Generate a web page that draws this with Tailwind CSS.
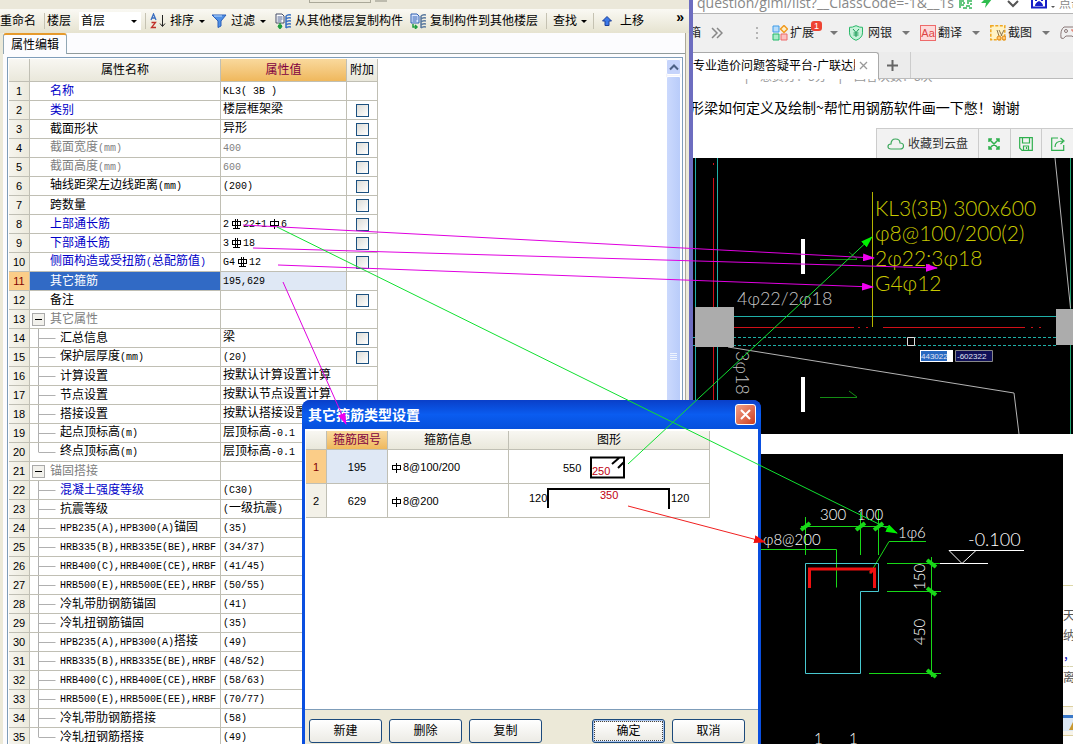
<!DOCTYPE html>
<html lang="zh-CN">
<head>
  <meta charset="UTF-8" />
  <meta name="viewport" content="width=device-width, initial-scale=1.0"/>
  <title>属性编辑</title>
  <script src="https://cdn.jsdelivr.net/npm/@tailwindcss/browser@4"></script>
</head>
<body class="relative h-screen overflow-hidden flex bg-white text-black text-[12px] leading-[18px] font-['Liberation_Sans','Noto_Sans_CJK_SC',sans-serif]">

  <!-- Rebar symbols shared by both tables -->
  <svg class="hidden">
    <symbol id="bar-1" viewBox="0 0 12 12"><path d="M5.500 1v10M1.500 3.500h8v4h-8z" fill="none" stroke="currentColor" shape-rendering="crispEdges"/></symbol>
    <symbol id="bar-2" viewBox="0 0 12 12"><path d="M4.500 1v9M6.500 1v9M1.500 3.500h8v4h-8zM2 10.500h7" fill="none" stroke="currentColor" shape-rendering="crispEdges"/></symbol>
  </svg>

  <!-- Property editor window -->
  <section class="w-[693px] shrink-0 h-full flex flex-col bg-[#ece9d8] border-r-4 border-[#6d6dc0] overflow-hidden">
    <div class="h-[9px] shrink-0 flex items-start pl-[309px] bg-[#ebe8da]">
      <span class="w-[62px] h-[3px] border border-t-0 border-[#aaa899]"></span>
      <span class="w-3 h-[2px] ml-1 bg-[#bdbbae]"></span>
    </div>
    <nav class="h-6 shrink-0 flex items-center whitespace-nowrap bg-linear-to-b from-[#faf9f4] to-[#e6e3d0]">
      <button>重命名</button>
      <span class="w-px h-4 bg-[#c5c2b2] ml-2 mr-[2px]"></span>
      <label for="floor">楼层</label>
      <span class="relative ml-2 flex items-center">
        <select id="floor" class="appearance-none w-[62px] h-[18px] bg-white pl-[2px] leading-[16px]"><option>首层</option></select>
        <span class="absolute right-1 border-x-[3px] border-t-[3px] border-x-transparent border-t-black"></span>
      </span>
      <span class="w-px h-4 bg-[#c5c2b2] ml-1 mr-1"></span>
      <button class="flex items-center">
        <svg class="w-4 h-4 mr-1" viewBox="0 0 16 16" fill="none"><path d="M1 7l2.500-6L6 7M2 5h3" stroke="#3a6ec0" stroke-width="1.300"/><path d="M1.500 9.500h4l-4 5h4.500" stroke="#c0302a" stroke-width="1.300"/><path d="M12.500 2v11M10 10.500l2.500 3 2.500-3" stroke="#222"/></svg>
        排序<span class="ml-[5px] border-x-[3px] border-t-[3px] border-x-transparent border-t-black"></span>
      </button>
      <button class="flex items-center ml-[6px]">
        <svg class="w-4 h-4 mr-1" viewBox="0 0 16 16"><path d="M1 2h14l-5 6v5l-3 1.500V8z" fill="#4f90e6" stroke="#2a5fb8"/><path d="M3 3h8" stroke="#bcdcff"/></svg>
        过滤<span class="ml-[5px] border-x-[3px] border-t-[3px] border-x-transparent border-t-black"></span>
      </button>
      <button class="flex items-center ml-[9px]">
        <svg class="w-4 h-4 mr-1" viewBox="0 0 16 16" fill="none"><path d="M1 1h6l2 2v7H1z" fill="#fff" stroke="#444c66"/><path d="M2.500 4h5M2.500 6h5M2.500 8h4" stroke="#4a5e90"/><path d="M3 12.500h4M5 10v6M3 13l2 2.500L7 13" stroke="#1f9e40" stroke-width="1.500"/><path d="M11 3q2-2 5-1M11 6q2-2 5-1M11 9q2-2 5-1M11 12q2-2 5-1M11 15q2-2 5-1M11 3v12" stroke="#3970c4" stroke-width="1.500"/></svg>
        从其他楼层复制构件
      </button>
      <button class="flex items-center ml-[7px]">
        <svg class="w-4 h-4 mr-1" viewBox="0 0 16 16" fill="none"><path d="M1 1h6l2 2v7H1z" fill="#dce8ff" stroke="#2f5eb0"/><path d="M2.500 4h5M2.500 6h5M2.500 8h4" stroke="#2f5eb0"/><path d="M3 11v3h4M5 12l2 2-2 2" stroke="#1f9e40" stroke-width="1.500"/><path d="M11 3q2-2 5-1M11 6q2-2 5-1M11 9q2-2 5-1M11 12q2-2 5-1M11 15q2-2 5-1M11 3v12" stroke="#58789e" stroke-width="1.500"/></svg>
        复制构件到其他楼层
      </button>
      <span class="w-px h-4 bg-[#c5c2b2] ml-2 mr-[6px]"></span>
      <button class="flex items-center">查找<span class="ml-1 border-x-[3px] border-t-[3px] border-x-transparent border-t-black"></span></button>
      <span class="w-px h-4 bg-[#c5c2b2] ml-[6px] mr-2"></span>
      <button class="flex items-center">
        <svg class="w-[10px] h-[10px] mr-2" viewBox="0 0 10 10"><path d="M5 .5L9.500 5H7v4.500H3V5H.5z" fill="#3b78e8" stroke="#1c3f98"/></svg>
        上移
      </button>
      <button class="ml-auto mr-[5px] pb-2 text-[14px] font-bold leading-[16px]">»</button>
    </nav>

    <div class="grow min-h-0 flex flex-col ml-[3px] mr-[3px] border-r border-[#aca899] bg-[#fcfcfe]">
      <div class="h-[21px] shrink-0 flex border-b border-[#919b9c]">
        <button class="h-[21px] w-[64px] border border-b-0 border-t-2 border-[#91a7b4] border-t-[#e69a2c] rounded-t-[3px] bg-[#fcfcfe] leading-[18px]">属性编辑</button>
      </div>
      <div class="grow min-h-0 mt-[3px] ml-1 mr-[2px] flex items-stretch border border-b-0 border-[#7f9db9] bg-white pl-px pt-px pr-px">
        <div class="grow overflow-hidden">
          <table class="table-fixed w-[369px] border-separate border-spacing-0">
            <colgroup><col class="w-[21px]"><col class="w-[191px]"><col class="w-[126px]"><col class="w-[31px]"></colgroup>
            <thead>
              <tr class="h-[23px] bg-linear-to-b from-[#f8f7f2] to-[#e9e7da]">
                <th class="border-r border-b border-[#c0bfb4]"></th>
                <th class="border-r border-b border-[#c0bfb4] font-normal">属性名称</th>
                <th class="border-r border-b border-[#c0bfb4] font-normal text-[#800040] bg-linear-to-b from-[#f9d99c] to-[#efb85c]">属性值</th>
                <th class="border-r border-b border-[#c0bfb4] font-normal">附加</th>
              </tr>
            </thead>
            <tbody id="props"></tbody>
          </table>
        </div>
        <div class="w-[15px] shrink-0 flex flex-col gap-px bg-[#f3f3fb]">
          <button class="h-4 shrink-0 flex items-center justify-center rounded-[2px] border border-white bg-[#c6d4fb]" aria-label="up">
            <svg class="w-[10px] h-[8px]" viewBox="0 0 10 8"><path d="M1 6.500l4-4 4 4" fill="none" stroke="#4d6185" stroke-width="2"/></svg>
          </button>
          <div class="h-[562px] shrink-0 flex items-center justify-center rounded-[2px] border border-white bg-linear-to-r from-[#cbd9fd] to-[#b9ccfa]">
            <svg class="w-2 h-2" viewBox="0 0 8 8"><path d="M0 .5h7M0 2.500h7M0 4.500h7M0 6.500h7" stroke="#eef4fe"/></svg>
          </div>
        </div>
      </div>
    </div>
  </section>

  <!-- Web browser window -->
  <section class="grow min-w-0 h-full flex flex-col overflow-hidden whitespace-nowrap">
    <div class="h-[14px] shrink-0 flex items-end border-b border-[#b5b5b5] bg-white overflow-hidden text-[#888]">
      <span class="w-[264px] shrink-0 pl-1 overflow-hidden font-['Open_Sans'] text-[14px] leading-[20px]">question/giml/list?__ClassCode=-1&amp;__1s</span>
      <svg class="w-[13px] h-[9px] shrink-0 mb-1 ml-[2px]" viewBox="0 0 13 9"><path d="M0 1h5M0 3h3M4 3h2M0 5h5M0 7h2M4 8h4M8 1h5M8 3h2M11 4h2M7 6h4M10 8h3" stroke="#35b558" stroke-width="1.500"/></svg>
      <svg class="w-3 h-[10px] shrink-0 mb-1 ml-2" viewBox="0 0 12 10"><path d="M8 0h4L5 9l1-5H1l4-4z" fill="#2ebd4e"/></svg>
      <span class="w-px h-[13px] ml-[9px] bg-[#ccc]"></span>
      <svg class="w-3 h-2 shrink-0 mb-[5px] ml-[6px]" viewBox="0 0 12 8"><path d="M1 1l5 5 5-5" fill="none" stroke="#555" stroke-width="2"/></svg>
      <span class="w-px h-[13px] ml-[6px] bg-[#ccc]"></span>
      <svg class="w-4 h-[11px] shrink-0 mb-1 ml-[6px]" viewBox="0 0 16 11"><path d="M1 0v9.500h14V0" fill="#fff" stroke="#1720c8" stroke-width="2"/><path d="M4 8q0-3 4-5 4 2 4 5zM4 0h2v3H4zM10 0h2v3h-2z" fill="#1720c8"/></svg>
      <span class="ml-1 mb-[5px] border-x-2 border-t-2 border-x-transparent border-t-[#555]"></span>
      <span class="ml-1">点击</span>
    </div>

    <nav class="h-[38px] shrink-0 flex items-center bg-[#f0f0f0] text-[#222] overflow-hidden">
      <span class="w-2 shrink-0 flex justify-end overflow-hidden"><span>箱</span></span>
      <svg class="w-3 h-3 ml-[10px] shrink-0" viewBox="0 0 12 12"><path d="M1 1l5 5-5 5M6 1l5 5-5 5" fill="none" stroke="#888" stroke-width="1.500"/></svg>
      <svg class="w-1 h-3 ml-8 mr-[13px] shrink-0" viewBox="0 0 4 12"><path d="M2 0v12" stroke="#b4b4b4" stroke-width="2" stroke-dasharray="2 3"/></svg>
      <button class="relative flex items-center shrink-0">
        <svg class="w-4 h-4 mr-[2px]" viewBox="0 0 16 16" fill="none"><path d="M1 1h6v6H1z" fill="#b8dcfa" stroke="#3d9be8"/><path d="M12 .5L15.500 4 12 7.500 8.500 4z" fill="#fff0c8" stroke="#f09a20" stroke-width="1.500"/><path d="M1 9h6v6H1z" fill="#a8ecc8" stroke="#20b868"/><path d="M9 9h6v6H9z" fill="#fbc0c0" stroke="#ee6a6a"/></svg>
        扩展
        <span class="absolute -right-2 -top-[3px] w-[11px] h-[10px] rounded-[3px] bg-[#ee4433] text-white text-[9px] leading-[10px] text-center">1</span>
      </button>
      <span class="ml-4 border-x-4 border-t-4 border-x-transparent border-t-[#777] shrink-0"></span>
      <button class="flex items-center ml-[10px] shrink-0">
        <svg class="w-4 h-4 mr-1" viewBox="0 0 16 16" fill="none"><path d="M8 .7q4 2 6.500 1.600v5.500q0 5-6.500 7.500Q1.500 12.800 1.500 7.800V2.300Q4 2.700 8 .7z" fill="#c8f2da" stroke="#28b868"/><path d="M5 4l3 3.500L11 4M8 7.500V12M5.500 8h5M5.500 10h5" stroke="#1a9a55"/></svg>
        网银
      </button>
      <span class="ml-[10px] border-x-4 border-t-4 border-x-transparent border-t-[#777] shrink-0"></span>
      <button class="flex items-center ml-[10px] shrink-0">
        <span class="w-4 h-4 mr-[2px] border border-[#ee6a6a] bg-[#fcdada] text-[#dd4444] text-[11px] leading-[14px]">Aa</span>
        翻译
      </button>
      <span class="ml-[10px] border-x-4 border-t-4 border-x-transparent border-t-[#777] shrink-0"></span>
      <button class="flex items-center ml-[10px] shrink-0">
        <svg class="w-4 h-4 mr-[2px]" viewBox="0 0 16 16" fill="none"><path d="M.8.800h14v14H.8z" fill="#fff2c4" stroke="#f0a820" stroke-width="1.500" stroke-dasharray="3 1.500"/><path d="M7 5l2 6M14 5l-3 6M9 5l3 6" stroke="#8a7350"/><circle cx="9" cy="13" r="2" fill="#ffc870" stroke="#e08818"/><circle cx="14" cy="13" r="2" fill="#ffc870" stroke="#e08818"/></svg>
        截图
      </button>
      <span class="ml-[10px] border-x-4 border-t-4 border-x-transparent border-t-[#777] shrink-0"></span>
      <svg class="w-[18px] h-[14px] ml-[10px] shrink-0" viewBox="0 0 18 14" fill="none"><path d="M4 1h10q4 3 3 11-2 2-5-2H6q-3 4-5 2Q0 4 4 1z" stroke="#8a7878"/><circle cx="6" cy="5" r="1.500" stroke="#8a7878"/><path d="M11 4h2v2" stroke="#dd6655"/></svg>
    </nav>

    <div class="h-[27px] shrink-0 flex items-center bg-[#ececec] border-b border-[#bbb]">
      <div class="w-[186px] h-[27px] shrink-0 flex items-center bg-white border border-b-0 border-l-0 border-[#aaa] rounded-tr-[3px]">
        <span class="w-[162px] overflow-hidden">专业造价问题答疑平台-广联达服</span>
        <button class="ml-1" aria-label="close"><svg class="w-[9px] h-[9px]" viewBox="0 0 9 9"><path d="M1 1l7 7M8 1L1 8" stroke="#999" stroke-width="1.300"/></svg></button>
      </div>
      <button class="ml-2" aria-label="new tab"><svg class="w-[11px] h-[11px]" viewBox="0 0 11 11"><path d="M5.500 0v11M0 5.500h11" stroke="#666" stroke-width="2"/></svg></button>
      <span class="w-px h-[26px] ml-3 bg-[#ccc]"></span>
    </div>

    <div class="h-[5px] shrink-0 flex items-end overflow-hidden text-[#999] pl-1 gap-3">
      <span class="h-[16px]">·········</span><span class="h-[16px]">|</span><span class="h-[16px]">悬赏分：5分</span><span class="h-[16px]">|</span><span class="h-[16px]">回答次数：5次</span>
    </div>
    <p class="h-[44px] shrink-0 pt-3 text-[14px] leading-[22px] -indent-[3px] overflow-hidden font-['Noto_Sans_CJK_SC',sans-serif]">形梁如何定义及绘制~帮忙用钢筋软件画一下憋！谢谢</p>
    <div class="h-[30px] shrink-0 flex justify-end">
      <div class="flex items-stretch w-[197px] border border-r-0 border-b-0 border-[#ccc] bg-[#f2f2f2] text-[#333]">
        <button class="w-[102px] flex items-center justify-center gap-1">
          <svg class="w-[17px] h-3" viewBox="0 0 17 12"><path d="M4 11q-3 0-3-2.500T4 6q0-5 4.500-5T13 5q3.500 0 3.500 3T13 11z" fill="none" stroke="#3ba85c" stroke-width="1.200"/></svg>
          收藏到云盘
        </button>
        <button class="w-8 flex items-center justify-center border-l border-[#ccc]" aria-label="fullscreen"><svg class="w-3 h-3" viewBox="0 0 12 12"><path d="M1 1l10 10M11 1L1 11M1 4V1h3M8 1h3v3M11 8v3H8M4 11H1V8" fill="none" stroke="#2fb04e" stroke-width="1.500"/></svg></button>
        <button class="w-8 flex items-center justify-center border-l border-[#ccc]" aria-label="save"><svg class="w-[14px] h-[14px]" viewBox="0 0 14 14"><path d="M.7.700h12.600v12.600H3L.7 11zM3.500 1v5h7V1M4.500 13V9h5v4M7.500 10v2" fill="none" stroke="#2fb04e" stroke-width="1.200"/></svg></button>
        <button class="w-8 flex items-center justify-center border-l border-[#ccc]" aria-label="share"><svg class="w-[14px] h-[14px]" viewBox="0 0 14 14"><path d="M7 1H.7v12.300h12V8M4 10q0-6 8-6M9.500 1l3.500 3-3.500 3" fill="none" stroke="#2fb04e" stroke-width="1.200"/></svg></button>
      </div>
    </div>

    <!-- Plan drawing -->
    <svg class="w-[380px] h-[276px] shrink-0 bg-black font-['Lato'] font-light" viewBox="693 158 380 276" fill="none">
      <path d="M695.500 158v276M717.500 158v276M734 316.500h322" stroke="#20b0a8"/>
      <path d="M1070.500 158v276" stroke="#20a070"/>
      <path d="M713.500 163v2M713.500 178v256M734 327.500h120M858 327.500h2M866 327.500h2M883 327.500h142M1031 327.500h2M1039 327.500h2" stroke="#d01018"/>
      <path d="M693 337.500h363M693 345.500h363" stroke="#20b0a8" stroke-dasharray="3 2"/>
      <path d="M1055 158l15.500 150M728 347l286 46 5 41" stroke="#b4b4b4"/>
      <path d="M695 307h39v40h-39zM1056 309h17v36h-17z" fill="#acacac"/>
      <path d="M907.500 337.500h7v8h-7z" fill="#000" stroke="#ddd"/>
      <path d="M872.500 192v135" stroke="#b4b400"/>
      <g fill="#c8c800" font-size="21">
        <text x="875" y="216">KL3(3B) 300x600</text>
        <text x="875" y="241">φ8@100/200(2)</text>
        <text x="875" y="266">2φ22;3φ18</text>
        <text x="875" y="291">G4φ12</text>
      </g>
      <g fill="#c4c4c4" font-size="18">
        <text x="737" y="305">4φ22/2φ18</text>
        <text transform="translate(736 351) rotate(90)">3φ18</text>
      </g>
      <path d="M803 239v35M803 377v35" stroke="#fff" stroke-width="4"/>
      <path d="M820 259.500h37M849 252l8 7M820 397.500h37M849 391l8 6" stroke="#148c14"/>
      <path d="M920 350h33v12h-33z" fill="#fff"/>
      <path d="M921 351h26v10h-26z" fill="#2868c0"/>
      <path d="M955.500 350.500h37v11h-37z" fill="#101058" stroke="#888"/>
      <g fill="#e0e4f4" font-size="8" font-family="Liberation Sans" font-weight="400">
        <text x="921" y="359">443022</text>
        <text x="957" y="359">-602322</text>
      </g>
    </svg>

    <!-- Section drawing -->
    <div class="mt-5 grow min-h-0 flex overflow-hidden">
      <svg class="w-[370px] h-[290px] shrink-0 bg-black font-['Lato'] font-light" viewBox="693 454 370 290" fill="none">
        <g stroke="#18d818">
          <path d="M801 526.500h87M805.500 517v38M860.500 512v43M878.500 510v45M761 549.500h75.500v38M926 541.500h-37l-19 32M887 563.500h53M887 591.500h54M869 673.500h72M931.500 557v120"/>
          <path d="M801 530l9-7M856 530l9-7M874 530l9-7M927 560l9 7M927 588l9 7M927 670l9 7" stroke-width="4"/>
        </g>
        <path d="M805.500 563.500h73v28h-18v82h-55z" stroke="#48c8d0"/>
        <path d="M809.500 588v-19h65v19M870 573l4-4" stroke="#f01010" stroke-width="3"/>
        <path d="M949 550.500h75M949 550.500l13 13 14-13M940 563.500h48" stroke="#fff"/>
        <g fill="#fff" font-size="15">
          <text x="820" y="520">300</text>
          <text x="857" y="520">100</text>
          <text x="763" y="545">φ8@200</text>
          <text x="898" y="538">1φ6</text>
          <text x="968" y="546" font-size="18">-0.100</text>
          <text transform="translate(925 590) rotate(-90)">150</text>
          <text transform="translate(925 645) rotate(-90)">450</text>
          <text x="814" y="744">1</text>
          <text x="849" y="744">1</text>
        </g>
      </svg>
      <div class="grow overflow-hidden pt-[131px] text-[#555]">
        <div class="border-t border-[#ddd8a8] pt-5 leading-[20px]">天<br>纳<br><a href="#" class="text-[#1010b0]">，点</a></div>
        <div class="border-t border-dashed border-[#d8d4b0] pt-[2px] h-[40px]">离</div>
        <div class="h-[30px] border-y border-[#ddd0a0] bg-[#f7f4ea] pt-2">
          <div class="h-4 border-t-[3px] border-[#3a78c8] bg-[#dce8f4] flex justify-end"><svg class="w-1 h-3" viewBox="0 0 4 12"><path d="M4 4v8H0z" fill="#c89830"/></svg></div>
        </div>
      </div>
    </div>
  </section>

  <!-- Stirrup type dialog -->
  <div role="dialog" aria-labelledby="dlg-title" class="absolute left-[302px] top-[400px] bottom-0 w-[459px] flex flex-col rounded-t-[8px] bg-[#0a4fe0] overflow-hidden">
    <div class="h-[29px] shrink-0 flex items-center justify-between pl-[6px] pr-[5px] bg-linear-to-b from-[#0a3fc8] via-[#0a5cf0] to-[#0650dc]">
      <h2 id="dlg-title" class="text-white font-bold text-[14px]">其它箍筋类型设置</h2>
      <button class="w-[21px] h-[21px] flex items-center justify-center rounded-[3px] border border-white bg-linear-to-br from-[#f0a088] to-[#cc3a18]" aria-label="close">
        <svg class="w-[11px] h-[11px]" viewBox="0 0 11 11"><path d="M1 1l9 9M10 1l-9 9" stroke="#fff" stroke-width="2"/></svg>
      </button>
    </div>
    <div class="grow flex flex-col mx-[3px] bg-white">
      <div class="grow pl-px pt-[2px] border-b border-[#7f9db9]">
        <table class="table-fixed w-[404px] border-separate border-spacing-0">
          <colgroup><col class="w-[21px]"><col class="w-[61px]"><col class="w-[121px]"><col class="w-[201px]"></colgroup>
          <thead>
            <tr class="h-[19px] bg-linear-to-b from-[#f8f7f2] to-[#e9e7da]">
              <th class="border-r border-b border-[#c0bfb4]"></th>
              <th class="border-r border-b border-[#c0bfb4] font-normal text-[#800040] bg-linear-to-b from-[#f9d99c] to-[#efb85c]">箍筋图号</th>
              <th class="border-r border-b border-[#c0bfb4] font-normal">箍筋信息</th>
              <th class="border-r border-b border-[#c0bfb4] font-normal">图形</th>
            </tr>
          </thead>
          <tbody class="text-[11px]">
            <tr class="h-[34px]">
              <th class="border-r border-b border-[#c0bfb4] font-normal bg-[#fbcd88] text-[#800000]">1</th>
              <td class="border-r border-b border-[#c0bfb4] bg-[#dfe8f5] text-center">195</td>
              <td class="border-r border-b border-[#c0bfb4] pl-[3px]"><svg class="inline w-3 h-3"><use href="#bar-1"/></svg>8@100/200</td>
              <td class="border-r border-b border-[#c0bfb4]">
                <svg class="block w-[200px] h-[33px]" viewBox="0 0 200 33" fill="none"><path d="M82 7.500h33v20H82zM103 14l7-6M109 18l6-6" stroke="#000" stroke-width="2"/><text x="54" y="22" fill="#000">550</text><text x="83" y="25" fill="#c00010">250</text></svg>
              </td>
            </tr>
            <tr class="h-[34px]">
              <th class="border-r border-b border-[#c0bfb4] font-normal bg-[#f3f1e8]">2</th>
              <td class="border-r border-b border-[#c0bfb4] text-center">629</td>
              <td class="border-r border-b border-[#c0bfb4] pl-[3px]"><svg class="inline w-3 h-3"><use href="#bar-1"/></svg>8@200</td>
              <td class="border-r border-b border-[#c0bfb4]">
                <svg class="block w-[200px] h-[33px]" viewBox="0 0 200 33" fill="none"><path d="M39 24V5h121v20" stroke="#000" stroke-width="2"/><text x="20" y="18" fill="#000">120</text><text x="91" y="15" fill="#c00010">350</text><text x="162" y="18" fill="#000">120</text></svg>
              </td>
            </tr>
          </tbody>
        </table>
      </div>
      <div class="h-[34px] shrink-0 flex items-start gap-[7px] pt-[9px] pl-1 pr-[13px] bg-[#ece9d8]">
        <button class="w-[73px] h-6 rounded-[3px] border border-[#1c4a7c] bg-linear-to-b from-white to-[#ecebe5]">新建</button>
        <button class="w-[73px] h-6 rounded-[3px] border border-[#1c4a7c] bg-linear-to-b from-white to-[#ecebe5]">删除</button>
        <button class="w-[73px] h-6 rounded-[3px] border border-[#1c4a7c] bg-linear-to-b from-white to-[#ecebe5]">复制</button>
        <button class="w-[73px] h-6 ml-auto p-px rounded-[3px] border border-[#1c4a7c] bg-[#a8c4f0]"><span class="block h-5 border border-dotted border-[#444] bg-linear-to-b from-white to-[#ecebe5]">确定</span></button>
        <button class="w-[73px] h-6 rounded-[3px] border border-[#1c4a7c] bg-linear-to-b from-white to-[#ecebe5]">取消</button>
      </div>
    </div>
  </div>

  <!-- Annotation arrows -->
  <svg class="absolute left-0 top-0 w-[1073px] h-[744px] pointer-events-none" viewBox="0 0 1073 744" fill="none">
    <defs>
      <marker id="tip-m" markerWidth="12" markerHeight="8" refX="11" refY="4" orient="auto" markerUnits="userSpaceOnUse"><path d="M0 0l12 4-12 4z" fill="#f000f0"/></marker>
      <marker id="tip-g" markerWidth="12" markerHeight="8" refX="11" refY="4" orient="auto" markerUnits="userSpaceOnUse"><path d="M0 0l12 4-12 4z" fill="#00f000"/></marker>
      <marker id="tip-r" markerWidth="12" markerHeight="8" refX="11" refY="4" orient="auto" markerUnits="userSpaceOnUse"><path d="M0 0l12 4-12 4z" fill="#f01010"/></marker>
    </defs>
    <g stroke="#e000e0">
      <path d="M243 225L874 258" marker-end="url(#tip-m)"/>
      <path d="M253 248L937 268" marker-end="url(#tip-m)"/>
      <path d="M278 265L873 287" marker-end="url(#tip-m)"/>
      <path d="M283 282L346 424" marker-end="url(#tip-m)"/>
    </g>
    <g stroke="#10e030">
      <path d="M628 464L872 237" marker-end="url(#tip-g)"/>
      <path d="M277 227L897 533" marker-end="url(#tip-g)"/>
    </g>
    <path d="M628 506L765 542" stroke="#f02020" marker-end="url(#tip-r)"/>
  </svg>

  <script>
    // [name, value, kind, has checkbox]  kinds: b = blue, g = grey, s = selected, G = group, c = child, C = blue child, e = last child
    const rows = [
      ['名称', 'KL3( 3B )', 'b', 0], ['类别', '楼层框架梁', 'b', 1], ['截面形状', '异形', '', 1],
      ['截面宽度(mm)', '400', 'g', 1], ['截面高度(mm)', '600', 'g', 1], ['轴线距梁左边线距离(mm)', '(200)', '', 1],
      ['跨数量', '', '', 1], ['上部通长筋', '2{2}22+1{1}6', 'b', 1], ['下部通长筋', '3{2}18', 'b', 1],
      ['侧面构造或受扭筋(总配筋值)', 'G4{2}12', 'b', 1], ['其它箍筋', '195,629', 's', 0], ['备注', '', '', 1],
      ['其它属性', '', 'G', 0], ['汇总信息', '梁', 'c', 1], ['保护层厚度(mm)', '(20)', 'c', 1],
      ['计算设置', '按默认计算设置计算', 'c', 0], ['节点设置', '按默认节点设置计算', 'c', 0], ['搭接设置', '按默认搭接设置计算', 'c', 0],
      ['起点顶标高(m)', '层顶标高-0.1', 'c', 0], ['终点顶标高(m)', '层顶标高-0.1', 'e', 0],
      ['锚固搭接', '', 'G', 0], ['混凝土强度等级', '(C30)', 'C', 0], ['抗震等级', '(一级抗震)', 'c', 0],
      ['HPB235(A),HPB300(A)锚固', '(35)', 'c', 0], ['HRB335(B),HRB335E(BE),HRBF', '(34/37)', 'c', 0],
      ['HRB400(C),HRB400E(CE),HRBF', '(41/45)', 'c', 0], ['HRB500(E),HRB500E(EE),HRBF', '(50/55)', 'c', 0],
      ['冷轧带肋钢筋锚固', '(41)', 'c', 0], ['冷轧扭钢筋锚固', '(35)', 'c', 0],
      ['HPB235(A),HPB300(A)搭接', '(49)', 'c', 0], ['HRB335(B),HRB335E(BE),HRBF', '(48/52)', 'c', 0],
      ['HRB400(C),HRB400E(CE),HRBF', '(58/63)', 'c', 0], ['HRB500(E),HRB500E(EE),HRBF', '(70/77)', 'c', 0],
      ['冷轧带肋钢筋搭接', '(58)', 'c', 0], ['冷轧扭钢筋搭接', '(49)', 'e', 0]
    ];
    const mix = t => t.split(/(\{\d\})/).map(p => /^\{\d\}$/.test(p)
      ? `<svg class="inline w-3 h-3 ml-[2px]"><use href="#bar-${p[1]}"/></svg>`
      : p.replace(/[\x21-\x7e ]+/g, m => `<span class="font-['Liberation_Mono',monospace] text-[10px]">${m}</span>`)).join('');
    const tone = { b: 'text-[#0000c8]', C: 'text-[#0000c8]', g: 'text-[#808080]', G: 'text-[#808080]', s: 'text-white bg-[#316ac5]' };

    document.getElementById('props').innerHTML = rows.map(([name, value, kind, box], i) => {
      const n = i + 1;
      let lead = '<span class="w-5 shrink-0"></span>';
      if (kind === 'G') lead = '<button class="w-[13px] h-[13px] ml-[2px] mr-[5px] shrink-0 flex items-center justify-center border border-[#aaa] bg-[#f2f1ec]" aria-label="collapse"><span class="w-[7px] h-px bg-black"></span></button>';
      if ('cCe'.includes(kind) && kind) lead = `<svg class="w-[30px] h-[18px] shrink-0 overflow-visible" fill="none"><path d="${kind === 'e' ? 'M8.500 -1v10' : 'M8.500 -1v20'}M8.500 9.500h17" stroke="#b0b0b0"/></svg>`;
      return `<tr class="h-[19px]">
        <th class="p-0 border-r border-b border-[#c0bfb4] font-normal text-[11px] leading-[18px] ${kind === 's' ? 'bg-[#fbcd88] text-[#800000]' : 'bg-linear-to-r from-[#f6f5ee] to-[#eceadd]'}">${n}</th>
        <td class="p-0 border-r border-b border-[#c0bfb4] ${tone[kind] || ''}"><div class="h-[18px] flex items-center overflow-hidden whitespace-nowrap">${lead}<span id="p${n}">${mix(name)}</span></div></td>
        <td class="p-0 border-r border-b border-[#c0bfb4] ${kind === 'g' ? 'text-[#808080]' : ''} ${kind === 's' ? 'bg-[#dfe8f5]' : ''}"><div class="h-[18px] pl-[2px] overflow-hidden whitespace-nowrap leading-[17px]">${mix(value)}</div></td>
        <td class="p-0 border-r border-b border-[#c0bfb4]">${box ? `<input type="checkbox" aria-labelledby="p${n}" class="appearance-none block w-[13px] h-[13px] mx-auto border border-[#1c5180] bg-linear-to-br from-[#dcdcd7] to-white">` : ''}</td>
      </tr>`;
    }).join('');
  </script>
</body>
</html>
